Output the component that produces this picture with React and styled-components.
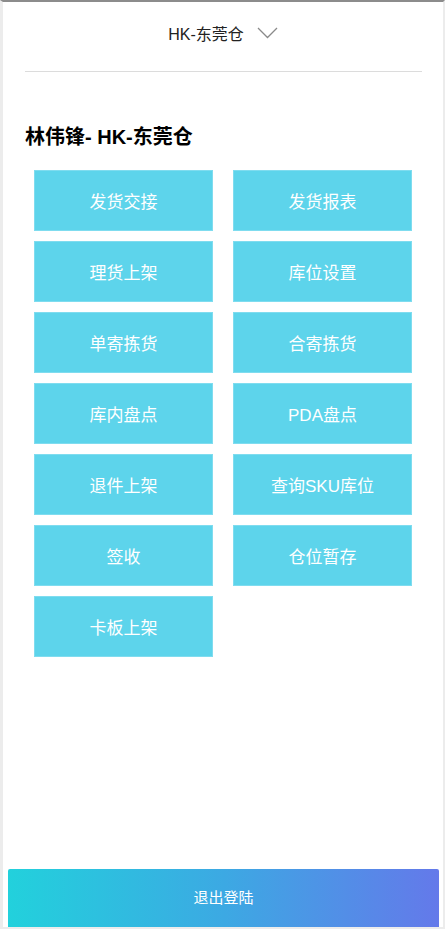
import React from 'react';
import styled, { createGlobalStyle } from 'styled-components';

const GlobalStyle = createGlobalStyle`
  html, body {
    margin: 0;
    padding: 0;
    background: #ececec;
    font-family: "Liberation Sans", "Noto Sans CJK SC", sans-serif;
  }
`;

const Page = styled.div`
  box-sizing: border-box;
  width: 445px;
  height: 929px;
  background: #fff;
  border-top: 2px solid #8c8c8c;
  border-left: 3px solid #ececec;
  border-right: 2px solid #ececec;
  border-bottom: 2px solid #ececec;
  display: flex;
  flex-direction: column;
`;

const Header = styled.div`
  height: 62px;
  display: flex;
  align-items: center;
  justify-content: center;
  gap: 13px;
  padding-bottom: 1px;
  box-sizing: border-box;
`;

const Store = styled.span`
  font-size: 16px;
  color: #222;
`;

const Divider = styled.div`
  height: 1px;
  background: #dcdcdc;
  margin: 7px 21px 0 22px;
`;

const Title = styled.h2`
  margin: 53px 0 0 22px;
  font-size: 20px;
  font-weight: bold;
  color: #000;
  line-height: 24px;
`;

const Grid = styled.div`
  margin: 21px 0 0 31px;
  display: grid;
  grid-template-columns: 179px 179px;
  column-gap: 20px;
  row-gap: 10px;
`;

const Tile = styled.button`
  height: 61px;
  border: 1px solid #7fdcef;
  background: #5dd4eb;
  color: #fff;
  font-size: 17px;
  font-family: inherit;
  cursor: pointer;
  padding: 0;
`;

const Logout = styled.button`
  margin: auto 4px 0 5px;
  height: 58px;
  padding: 0 0 4px;
  border: none;
  border-radius: 2px 2px 0 0;
  background: linear-gradient(90deg, #22d1dc 0%, #3ca9e3 50%, #6479ea 100%);
  color: #fff;
  font-size: 15px;
  font-family: inherit;
  cursor: pointer;
`;

const items = [
  '发货交接', '发货报表',
  '理货上架', '库位设置',
  '单寄拣货', '合寄拣货',
  '库内盘点', 'PDA盘点',
  '退件上架', '查询SKU库位',
  '签收', '仓位暂存',
  '卡板上架',
];

const Chevron = () => (
  <svg width="21" height="12" viewBox="0 0 21 12">
    <path d="M1 1 L10.5 10.5 L20 1" fill="none" stroke="#8a8a8a" strokeWidth="1.3" />
  </svg>
);

const App = () => (
  <>
    <GlobalStyle />
    <Page>
      <Header>
        <Store>HK-东莞仓</Store>
        <Chevron />
      </Header>
      <Divider />
      <Title>林伟锋- HK-东莞仓</Title>
      <Grid>
        {items.map((name) => (
          <Tile key={name}>{name}</Tile>
        ))}
      </Grid>
      <Logout>退出登陆</Logout>
    </Page>
  </>
);

export default App;
